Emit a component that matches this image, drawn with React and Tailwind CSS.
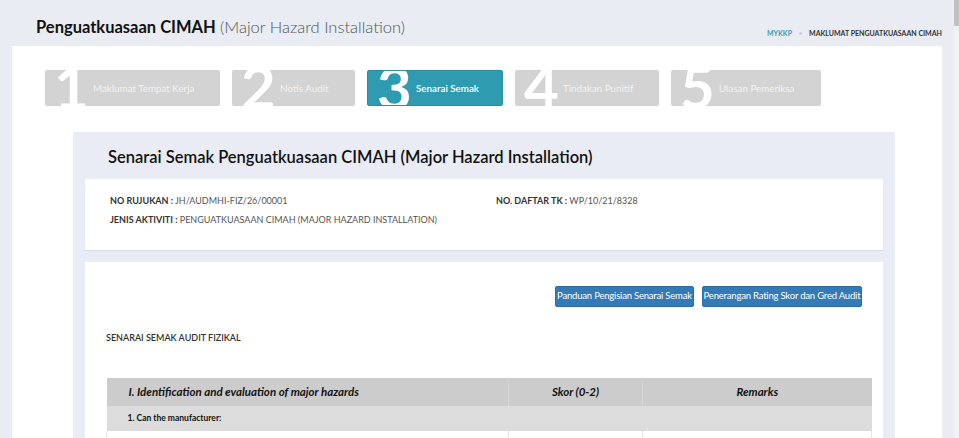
const steps = [
  { no: '1', label: 'Maklumat Tempat Kerja', w: 'w-[175px]' },
  { no: '2', label: 'Notis Audit', w: 'w-[123px]' },
  { no: '3', label: 'Senarai Semak', w: 'w-[136px]', active: true },
  { no: '4', label: 'Tindakan Punitif', w: 'w-[144px]' },
  { no: '5', label: 'Ulasan Pemeriksa', w: 'w-[150px]' },
];

export default function App() {
  return (
    <div className="flex h-[438px] overflow-hidden bg-[#e9ecf3] font-['Lato',sans-serif] text-[#333]">
      <div className="flex-1 min-w-0">

        {/* Header */}
        <div className="h-[46px] flex items-center justify-between pl-[36px] pr-[12px] pt-[8px]">
          <h1 className="text-[16.5px] leading-none text-[#111]">
            <span className="font-bold">Penguatkuasaan CIMAH</span>{' '}
            <span className="font-light text-[#555]">(Major Hazard Installation)</span>
          </h1>
          <div className="flex items-center gap-[7px] text-[7px] font-bold pt-[12px]">
            <span className="text-[#3a9cb5]">MYKKP</span>
            <span className="w-[3px] h-[3px] rounded-full bg-[#ccc]" />
            <span className="text-[#333]">MAKLUMAT PENGUATKUASAAN CIMAH</span>
          </div>
        </div>

        {/* Main panel */}
        <div className="bg-white mx-[12px] h-[392px] pt-[24px] pl-[33px]">
          {/* Steps */}
          <div className="flex gap-[12px]">
            {steps.map(s => (
              <div key={s.no}
                className={`relative overflow-hidden h-[36px] ${s.w} rounded-[2px] flex items-center pl-[48px]
                  ${s.active ? 'bg-[#2e9bb1] border border-[#2a8fa4]' : 'bg-[#d3d3d3]'}`}>
                <span className="absolute left-[9px] top-[-14px] text-[60px] font-bold leading-none text-white">{s.no}</span>
                <span className={`relative text-[9.8px] ${s.active ? 'text-white font-semibold' : 'text-[#f2f2f2]'}`}>{s.label}</span>
              </div>
            ))}
          </div>

          {/* Inner panel */}
          <div className="mt-[26px] ml-[28px] mr-[47px] bg-[#e9ecf4] px-[12px] h-[320px]">
            <div className="h-[47px] flex items-center pl-[23px] pt-[4px]">
              <h2 className="text-[16.5px] font-semibold text-[#111]">
                Senarai Semak Penguatkuasaan CIMAH (Major Hazard Installation)
              </h2>
            </div>

            {/* Info card */}
            <div className="bg-white h-[71px] pl-[25px] pt-[15px] grid grid-cols-[386px_1fr] text-[9px] uppercase shadow-[0_1px_1px_rgba(0,0,0,0.06)]">
              <div className="flex flex-col gap-[5px]">
                <div><span className="font-bold">NO RUJUKAN :</span> <span className="text-[#555]">JH/AUDMHI-FIZ/26/00001</span></div>
                <div><span className="font-bold">JENIS AKTIVITI :</span> <span className="text-[#555]">PENGUATKUASAAN CIMAH (MAJOR HAZARD INSTALLATION)</span></div>
              </div>
              <div><span className="font-bold">NO. DAFTAR TK :</span> <span className="text-[#555]">WP/10/21/8328</span></div>
            </div>

            {/* Checklist card */}
            <div className="bg-white mt-[12px] h-[200px] pt-[24px] pl-[21px] pr-[12px]">
              <div className="flex justify-end gap-[8px] pr-[9px]">
                <button className="h-[21px] w-[139px] rounded-[2px] bg-[#337ab7] border border-[#2e6da4] text-white text-[9.5px] tracking-[-0.2px]">
                  Panduan Pengisian Senarai Semak
                </button>
                <button className="h-[21px] w-[160px] rounded-[2px] bg-[#337ab7] border border-[#2e6da4] text-white text-[9.5px] tracking-[-0.2px]">
                  Penerangan Rating Skor dan Gred Audit
                </button>
              </div>

              <div className="mt-[24px] text-[9px] font-semibold text-[#333]">SENARAI SEMAK AUDIT FIZIKAL</div>

              <table className="mt-[33px] w-[765px] border-collapse table-fixed">
                <colgroup>
                  <col className="w-[402px]" />
                  <col className="w-[134px]" />
                  <col className="w-[229px]" />
                </colgroup>
                <thead>
                  <tr className="h-[28px] bg-[#cccccc] text-[11.5px] font-bold italic text-[#111]">
                    <th className="text-left pl-[22px] border-r border-[#d6d6d6]">I. Identification and evaluation of major hazards</th>
                    <th className="text-center border-r border-[#d6d6d6]">Skor (0-2)</th>
                    <th className="text-center">Remarks</th>
                  </tr>
                </thead>
                <tbody>
                  <tr className="h-[25px] bg-[#dcdcdc]">
                    <td colSpan="3" className="pl-[21px] text-[8.5px] font-bold text-[#111]">1. Can the manufacturer:</td>
                  </tr>
                  <tr className="h-[30px]">
                    <td className="border-l border-r border-[#e6e6e6]" />
                    <td className="border-r border-[#e6e6e6]" />
                    <td className="border-r border-[#e6e6e6]" />
                  </tr>
                </tbody>
              </table>
            </div>
          </div>
        </div>
      </div>

      {/* Scrollbar */}
      <div className="w-[5px] bg-[#f1f1f1] flex flex-col">
        <div className="h-[26px] bg-[#c1c1c1]" />
      </div>
    </div>
  );
}
